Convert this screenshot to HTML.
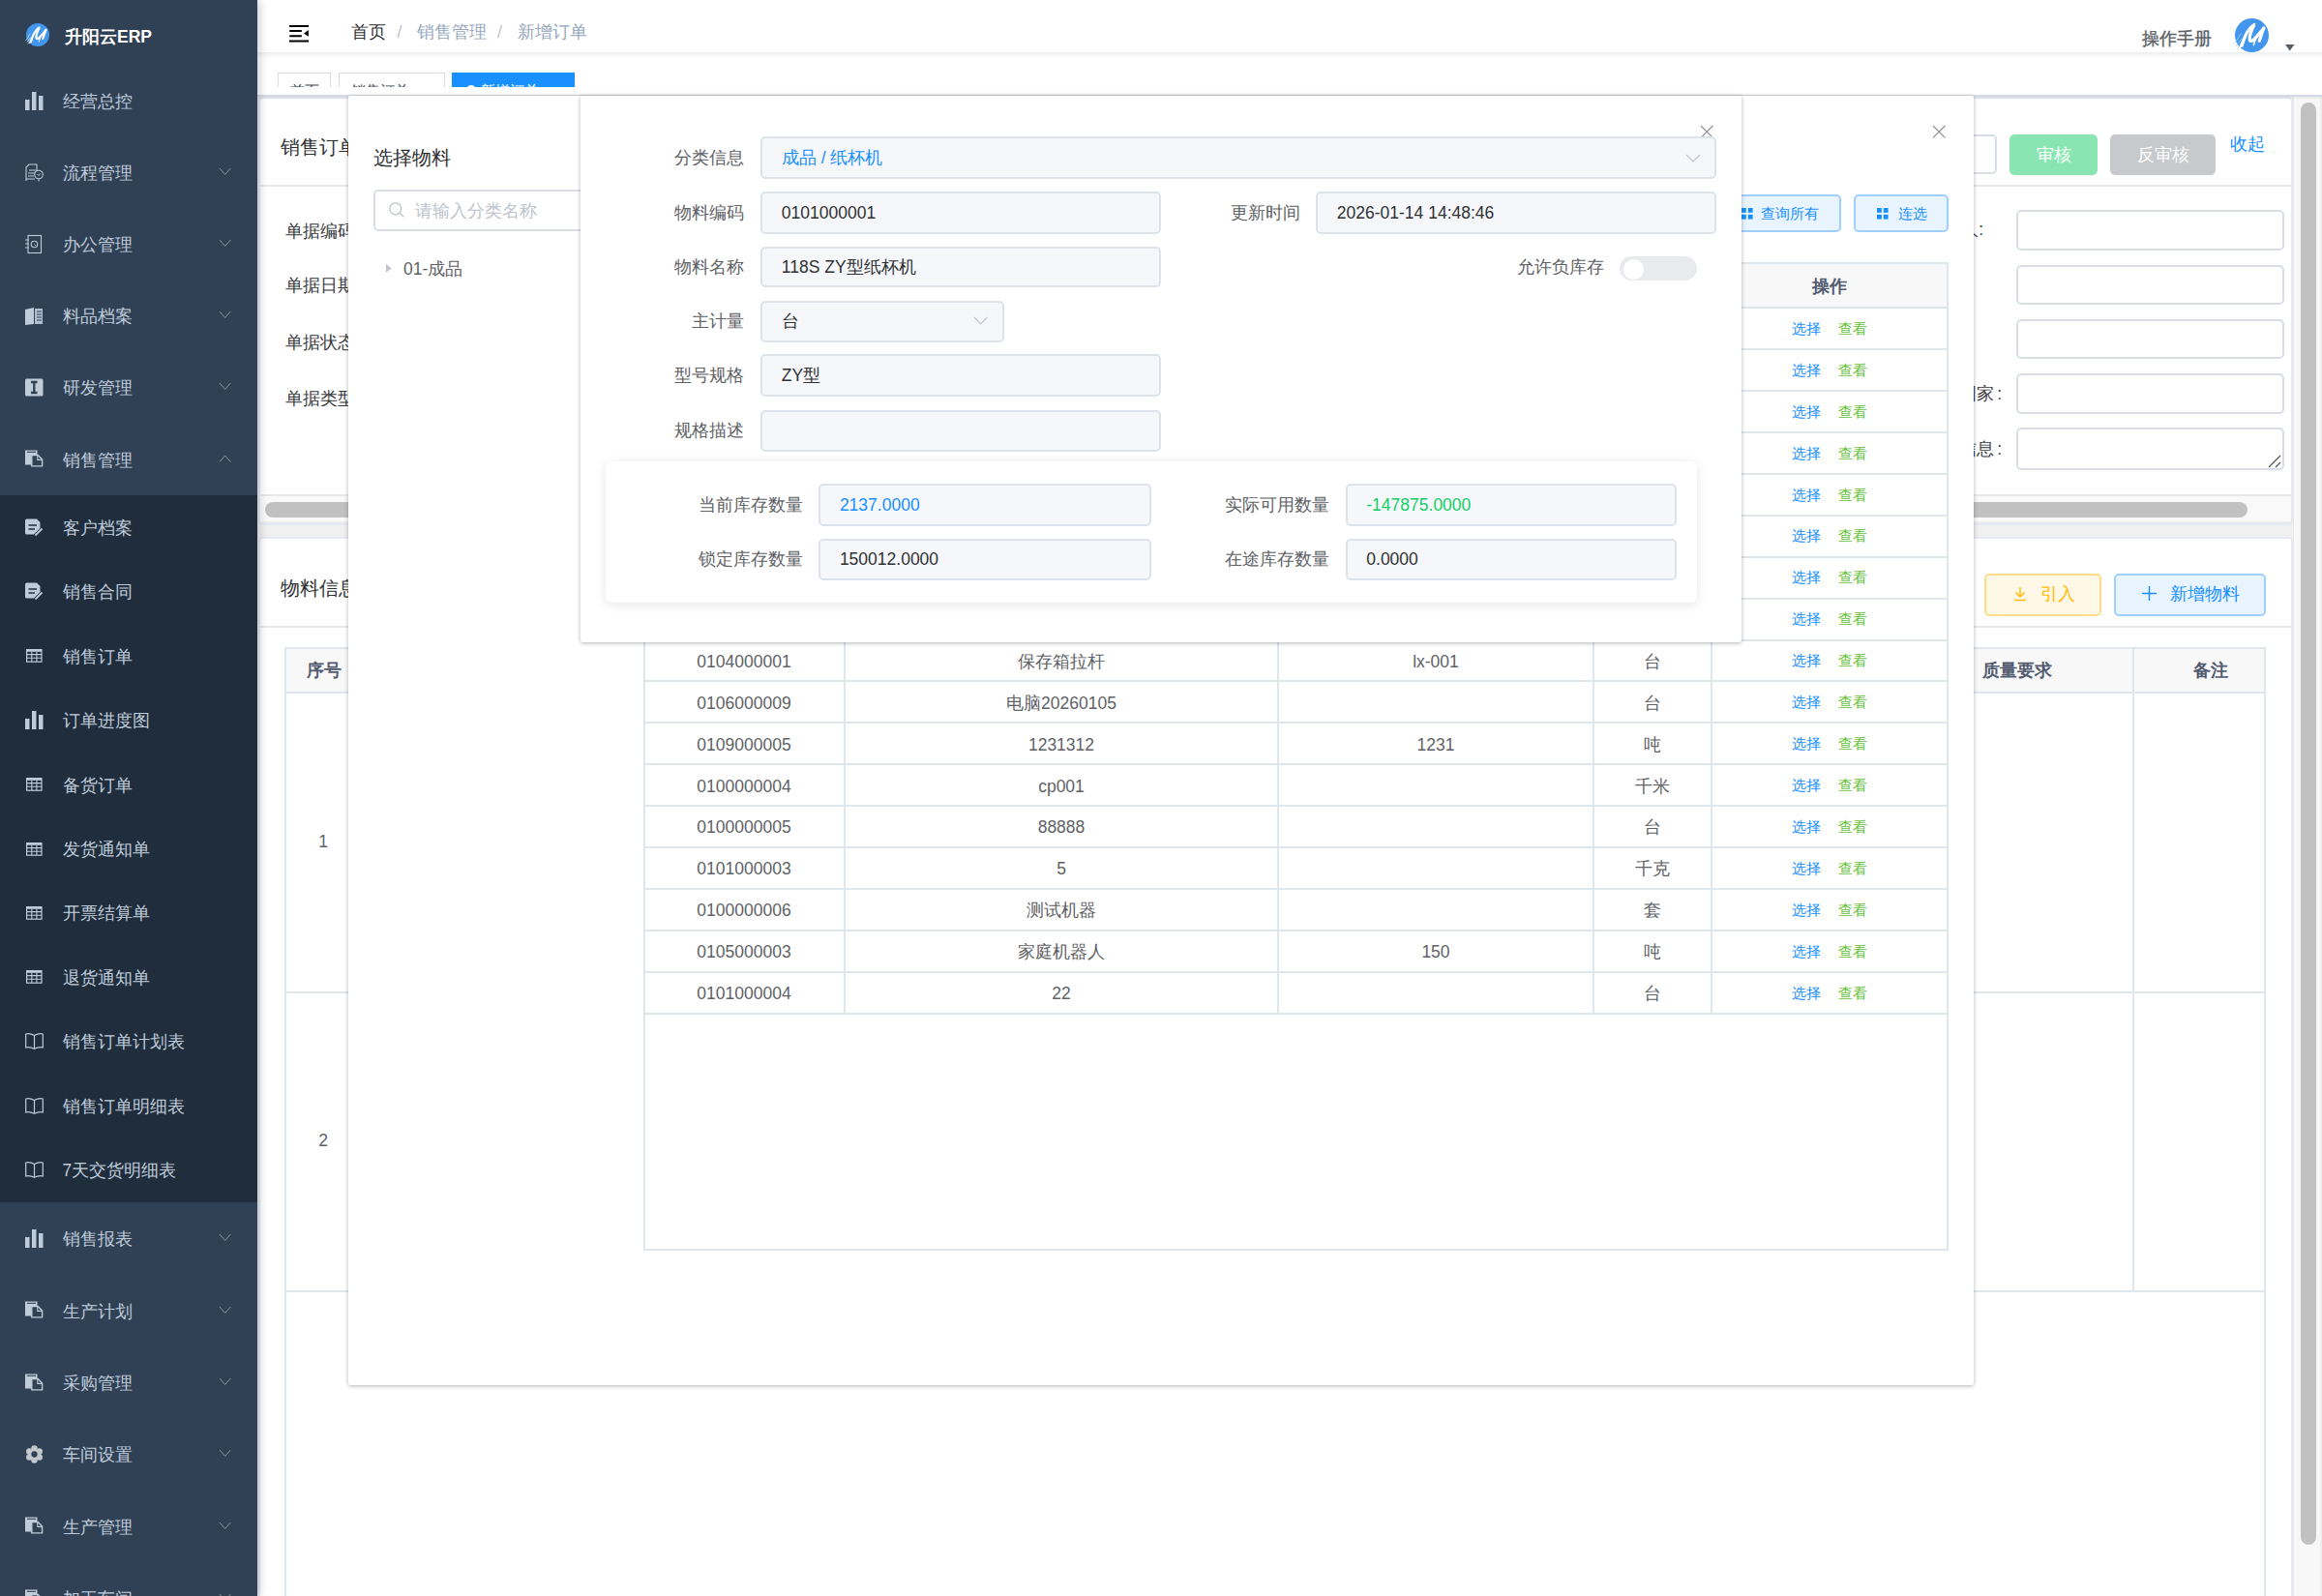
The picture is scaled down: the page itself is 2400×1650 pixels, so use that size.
<!DOCTYPE html><html><head><meta charset="utf-8"><style>
html,body{margin:0;padding:0;}
body{width:2400px;height:1650px;position:relative;overflow:hidden;background:#fff;font-family:"Liberation Sans",sans-serif;}
.t{position:absolute;white-space:nowrap;}
.b{position:absolute;box-sizing:border-box;}
svg{position:absolute;overflow:visible;}
.inp{position:absolute;box-sizing:border-box;border:1.3px solid #dcdfe6;border-radius:5px;background:#fff;}
.dis{position:absolute;box-sizing:border-box;border:1.3px solid #e4e7ed;border-radius:5px;background:#f5f7fa;}
</style></head><body>
<div class="b" style="left:266px;top:0px;width:2134px;height:1650px;background:#f0f0f0;"></div>
<div class="b" style="left:266.5px;top:99.8px;width:2103.5px;height:443.2px;background:#fff;border:2px solid #e4e9f3;border-radius:5px;"></div>
<div class="b" style="left:266.5px;top:191px;width:2103.5px;height:2px;background:#e4e9f3;"></div>
<div class="t" style="left:290px;top:140.0px;height:24px;line-height:24px;font-size:20px;color:#303133;font-weight:normal;">销售订单信息</div>
<div class="t" style="left:294.7px;top:226.9px;height:24px;line-height:24px;font-size:17.5px;color:#3a3b3e;font-weight:normal;">单据编码：</div>
<div class="t" style="left:294.7px;top:282.8px;height:24px;line-height:24px;font-size:17.5px;color:#3a3b3e;font-weight:normal;">单据日期：</div>
<div class="t" style="left:294.7px;top:342.0px;height:24px;line-height:24px;font-size:17.5px;color:#3a3b3e;font-weight:normal;">单据状态：</div>
<div class="t" style="left:294.7px;top:400.0px;height:24px;line-height:24px;font-size:17.5px;color:#3a3b3e;font-weight:normal;">单据类型：</div>
<div class="t" style="left:1930px;width:120px;text-align:right;top:224.5px;height:24px;line-height:24px;font-size:17.5px;color:#3a3b3e;font-weight:normal;">负责人:</div>
<div class="t" style="left:1949px;width:120px;text-align:right;top:395.4px;height:24px;line-height:24px;font-size:17.5px;color:#3a3b3e;font-weight:normal;">国家&thinsp;:</div>
<div class="t" style="left:1949px;width:120px;text-align:right;top:451.8px;height:24px;line-height:24px;font-size:17.5px;color:#3a3b3e;font-weight:normal;">信息&thinsp;:</div>
<div class="b" style="left:2083.7px;top:216.7px;width:277.5px;height:42.69999999999999px;border:2px solid #d9dde6;border-radius:5px;background:#fff;"></div>
<div class="b" style="left:2083.7px;top:273.6px;width:277.5px;height:41.69999999999999px;border:2px solid #d9dde6;border-radius:5px;background:#fff;"></div>
<div class="b" style="left:2083.7px;top:329.5px;width:277.5px;height:41.80000000000001px;border:2px solid #d9dde6;border-radius:5px;background:#fff;"></div>
<div class="b" style="left:2083.7px;top:386px;width:277.5px;height:41.69999999999999px;border:2px solid #d9dde6;border-radius:5px;background:#fff;"></div>
<div class="b" style="left:2083.7px;top:441.7px;width:277.5px;height:44.0px;border:2px solid #d9dde6;border-radius:5px;background:#fff;"></div>
<svg style="left:2344px;top:470px" width="14" height="14"><path d="M1 13 L13 1 M8 13 L13 8" stroke="#555" stroke-width="1.2"/></svg>
<div class="b" style="left:1960px;top:139.3px;width:103.59999999999991px;height:41.19999999999999px;border:2px solid #d9dde6;border-radius:5px;background:#fff;"></div>
<div class="b" style="left:2077px;top:139px;width:91px;height:41.80000000000001px;background:#89e6b2;border-radius:5px;"></div>
<div class="t" style="left:2077.0px;width:91px;text-align:center;top:148.0px;height:24px;line-height:24px;font-size:17.5px;color:#fff;font-weight:normal;">审核</div>
<div class="b" style="left:2181px;top:139px;width:109px;height:41.80000000000001px;background:#c8c9cc;border-radius:5px;"></div>
<div class="t" style="left:2181.0px;width:109px;text-align:center;top:148.0px;height:24px;line-height:24px;font-size:17.5px;color:#fff;font-weight:normal;">反审核</div>
<div class="t" style="left:2305px;top:137.0px;height:24px;line-height:24px;font-size:17.5px;color:#1890ff;font-weight:normal;">收起</div>
<div class="b" style="left:270px;top:510.8px;width:2098px;height:30.400000000000034px;background:#f9f9f9;border-top:2px solid #e8e8e8;border-bottom:2px solid #ececec;"></div>
<div class="b" style="left:273.8px;top:519px;width:2048.7999999999997px;height:16px;background:#c1c1c1;border-radius:8px;"></div>
<div class="b" style="left:266.5px;top:555px;width:2103.5px;height:1145px;background:#fff;border:2px solid #e4e9f3;border-radius:5px;"></div>
<div class="b" style="left:266.5px;top:647.3px;width:2103.5px;height:2.0px;background:#e4e9f3;"></div>
<div class="t" style="left:290px;top:596.4px;height:24px;line-height:24px;font-size:20px;color:#303133;font-weight:normal;">物料信息</div>
<div class="b" style="left:2051.4px;top:593px;width:120.59999999999991px;height:43.60000000000002px;background:#fff8e6;border:2.2px solid #ffdc8a;border-radius:5px;"></div>
<svg style="left:2080.5px;top:605.5px" width="14" height="16"><path d="M7 1 V11 M2.5 6.5 L7 11 L11.5 6.5 M1 14.5 H13" fill="none" stroke="#ffba00" stroke-width="1.4"/></svg>
<div class="t" style="left:2109px;top:601.5px;height:24px;line-height:24px;font-size:17.5px;color:#ffba00;font-weight:normal;">引入</div>
<div class="b" style="left:2185.2px;top:593px;width:156.80000000000018px;height:43.60000000000002px;background:#e8f4ff;border:2.2px solid #9ecfff;border-radius:5px;"></div>
<svg style="left:2214px;top:606px" width="15" height="15"><path d="M7.5 0 V15 M0 7.5 H15" fill="none" stroke="#1890ff" stroke-width="1.4"/></svg>
<div class="t" style="left:2243px;top:601.5px;height:24px;line-height:24px;font-size:17.5px;color:#1890ff;font-weight:normal;">新增物料</div>
<div class="b" style="left:294px;top:669px;width:2048px;height:47.700000000000045px;background:#f8f8f9;"></div>
<div class="b" style="left:294px;top:669px;width:2048px;height:1031px;border:2px solid #dfe6ec;"></div>
<div class="b" style="left:294px;top:714.8px;width:2048px;height:2.0px;background:#dfe6ec;"></div>
<div class="b" style="left:294px;top:1024.7px;width:2048px;height:2.0px;background:#dfe6ec;"></div>
<div class="b" style="left:294px;top:1334px;width:2048px;height:2px;background:#dfe6ec;"></div>
<div class="b" style="left:373px;top:669px;width:2px;height:667px;background:#dfe6ec;"></div>
<div class="b" style="left:1964px;top:669px;width:2px;height:667px;background:#dfe6ec;"></div>
<div class="b" style="left:2204.4px;top:669px;width:2.0px;height:667px;background:#dfe6ec;"></div>
<div class="t" style="left:295.5px;width:78px;text-align:center;top:681.0px;height:24px;line-height:24px;font-size:17.5px;color:#515a6e;font-weight:bold;">序号</div>
<div class="t" style="left:2049px;top:681.0px;height:24px;line-height:24px;font-size:17.5px;color:#515a6e;font-weight:bold;">质量要求</div>
<div class="t" style="left:2235.0px;width:100px;text-align:center;top:681.0px;height:24px;line-height:24px;font-size:17.5px;color:#515a6e;font-weight:bold;">备注</div>
<div class="t" style="left:314.0px;width:40px;text-align:center;top:858.3px;height:24px;line-height:24px;font-size:17.5px;color:#606266;font-weight:normal;">1</div>
<div class="t" style="left:314.0px;width:40px;text-align:center;top:1167.3px;height:24px;line-height:24px;font-size:17.5px;color:#606266;font-weight:normal;">2</div>
<div class="b" style="left:2370px;top:99.8px;width:30px;height:1550.2px;background:#f8f8f8;border-left:1.6px solid #e8e8e8;border-right:2px solid #efefef;"></div>
<div class="b" style="left:2378px;top:106px;width:16px;height:1491px;background:#c1c1c1;border-radius:8px;"></div>
<div class="b" style="left:266px;top:0px;width:2134px;height:54px;background:#fff;box-shadow:0 1px 5px rgba(0,21,41,.10);"></div>
<svg style="left:299px;top:25px" width="20" height="20"><path d="M0 1.9 H20 M0.3 7 H12.8 M0.3 12.3 H12.8 M0 17.6 H20" stroke="#000" stroke-width="2"/><path d="M19.8 6 L15 9.4 L19.8 12.8 Z" fill="#000"/></svg>
<div class="t" style="left:363px;top:21.4px;height:24px;line-height:24px;font-size:17.5px;color:#303133;font-weight:normal;">首页</div>
<div class="t" style="left:410.5px;top:21.4px;height:24px;line-height:24px;font-size:17.5px;color:#c0c4cc;font-weight:normal;">/</div>
<div class="t" style="left:431px;top:21.4px;height:24px;line-height:24px;font-size:17.5px;color:#97a8be;font-weight:normal;">销售管理</div>
<div class="t" style="left:514px;top:21.4px;height:24px;line-height:24px;font-size:17.5px;color:#c0c4cc;font-weight:normal;">/</div>
<div class="t" style="left:534.5px;top:21.4px;height:24px;line-height:24px;font-size:17.5px;color:#97a8be;font-weight:normal;">新增订单</div>
<div class="t" style="left:2214px;top:27.5px;height:24px;line-height:24px;font-size:17.5px;color:#5a5e66;font-weight:normal;-webkit-text-stroke:0.35px #5a5e66;">操作手册</div>
<svg style="left:2310px;top:18.8px" width="35" height="35" viewBox="0 0 35 35"><circle cx="17.5" cy="17.5" r="17.5" fill="#4296ee"/><path d="M4.3 30.5 L8.6 29.2 C10 24 12.5 17 16 12 C18 9 20.6 7.6 21.2 6.2 C21.4 5 20.3 4.6 19 5.2 C15.5 7.2 12 12 9.8 16.5 C7.8 20.5 6 25.5 4.3 30.5 Z" fill="#fff"/><path d="M19.6 7.5 C17.5 11.5 15 17 15.2 21.6 C15.5 24.2 17.5 23.8 19.5 22 C23 18.8 26.5 14 29.8 10.2" fill="none" stroke="#fff" stroke-width="3.2" stroke-linecap="round"/><path d="M29.8 10 C28 15 26.5 19.5 25.2 23.2" fill="none" stroke="#fff" stroke-width="3.3" stroke-linecap="round"/><path d="M22.2 19.5 L19.3 27.6" fill="none" stroke="#fff" stroke-width="1.5" stroke-linecap="round"/><path d="M-0.8 26.5 L6.5 15.5 M1.2 28.8 L7 21 M2.5 31.5 L5 28" fill="none" stroke="#a9cdf5" stroke-width="1" opacity=".8"/></svg>
<svg style="left:2362px;top:45.8px" width="9.5" height="6.5"><path d="M0 0 H9.5 L4.75 6.5 Z" fill="#5a5e66"/></svg>
<div class="b" style="left:266px;top:54px;width:2134px;height:44px;background:#fff;"></div>
<div class="b" style="left:266px;top:97.8px;width:2134px;height:2.0px;background:#d5dae3;box-shadow:0 1px 3px rgba(0,0,0,.10);"></div>
<div class="b" style="left:266px;top:54px;width:2134px;height:8px;background:linear-gradient(rgba(0,21,41,.075),rgba(0,21,41,.02) 50%,rgba(0,21,41,0));"></div>
<div class="b" style="left:266px;top:54px;width:2134px;height:36px;overflow:hidden;">
<div class="b" style="left:21.100000000000023px;top:21.200000000000003px;width:54.599999999999966px;height:37.6px;background:#fff;border:1.6px solid #d8dce5;"></div>
<div class="b" style="left:84.10000000000002px;top:21.200000000000003px;width:109.59999999999997px;height:37.6px;background:#fff;border:1.6px solid #d8dce5;"></div>
<div class="b" style="left:200.89999999999998px;top:21.200000000000003px;width:127.0px;height:37.6px;background:#1890ff;border:1.6px solid #1890ff;"></div>
<div class="t" style="left:34px;top:27.5px;height:24px;line-height:24px;font-size:15px;color:#495060;font-weight:normal;">首页</div>
<div class="t" style="left:96.5px;top:27.5px;height:24px;line-height:24px;font-size:15px;color:#495060;font-weight:normal;">销售订单</div>
<div class="b" style="left:216px;top:34.3px;width:10px;height:10.0px;background:#fff;border-radius:50%;"></div>
<div class="t" style="left:230.60000000000002px;top:27.5px;height:24px;line-height:24px;font-size:15px;color:#fff;font-weight:normal;">新增订单</div>
</div>
<div class="b" style="left:0px;top:0px;width:266px;height:1650px;background:#304156;box-shadow:2px 0 9px rgba(0,21,41,.22);"></div>
<div class="b" style="left:0px;top:512.1px;width:266px;height:731.4px;background:#1f2d3d;"></div>
<svg style="left:27px;top:24.4px" width="24" height="24" viewBox="0 0 35 35"><circle cx="17.5" cy="17.5" r="17.5" fill="#4296ee"/><path d="M4.3 30.5 L8.6 29.2 C10 24 12.5 17 16 12 C18 9 20.6 7.6 21.2 6.2 C21.4 5 20.3 4.6 19 5.2 C15.5 7.2 12 12 9.8 16.5 C7.8 20.5 6 25.5 4.3 30.5 Z" fill="#fff"/><path d="M19.6 7.5 C17.5 11.5 15 17 15.2 21.6 C15.5 24.2 17.5 23.8 19.5 22 C23 18.8 26.5 14 29.8 10.2" fill="none" stroke="#fff" stroke-width="3.2" stroke-linecap="round"/><path d="M29.8 10 C28 15 26.5 19.5 25.2 23.2" fill="none" stroke="#fff" stroke-width="3.3" stroke-linecap="round"/><path d="M22.2 19.5 L19.3 27.6" fill="none" stroke="#fff" stroke-width="1.5" stroke-linecap="round"/><path d="M-0.8 26.5 L6.5 15.5 M1.2 28.8 L7 21 M2.5 31.5 L5 28" fill="none" stroke="#ffffff" stroke-width="1" opacity=".8"/></svg>
<div class="t" style="left:67px;top:26.200000000000003px;height:24px;line-height:24px;font-size:17.5px;color:#fff;font-weight:bold;">升阳云ERP</div>
<svg style="left:25.7px;top:94.52px" width="19" height="19"><rect x="0" y="8" width="4.5" height="11" fill="#bfcbd9"/><rect x="7" y="0" width="4.5" height="19" fill="#bfcbd9"/><rect x="14" y="4" width="4.5" height="15" fill="#bfcbd9"/></svg>
<div class="t" style="left:64.6px;top:92.52px;height:24px;line-height:24px;font-size:17.5px;color:#bfcbd9;font-weight:normal;">经营总控</div>
<svg style="left:25.7px;top:168.76px" width="19" height="19"><path d="M1 18 V4 L4 1 H12 V8 M4 7 H11 M3 10 H10 M3 13 H9 M1 16 H10" fill="none" stroke="#bfcbd9" stroke-width="1.1"/><circle cx="14" cy="11.5" r="4.3" fill="none" stroke="#bfcbd9" stroke-width="1.1"/><path d="M12.5 11 L14 12.5 L15.5 10.5 M14 16 V18.5" fill="none" stroke="#bfcbd9" stroke-width="1"/></svg>
<div class="t" style="left:64.6px;top:166.76px;height:24px;line-height:24px;font-size:17.5px;color:#bfcbd9;font-weight:normal;">流程管理</div>
<svg style="left:227.3px;top:173.76px" width="11.299999999999983" height="6.5"><path d="M0 0 L5.6499999999999915 6.5 L11.299999999999983 0" fill="none" stroke="#909399" stroke-width="1.0"/></svg>
<svg style="left:25.7px;top:243.0px" width="19" height="19"><rect x="3" y="0.5" width="13.5" height="18" fill="none" stroke="#bfcbd9" stroke-width="1.1"/><circle cx="9.5" cy="9.5" r="3.3" fill="none" stroke="#bfcbd9" stroke-width="1.1"/><path d="M0 5 H4 M0 9 H4 M0 13 H4 M9.5 9.5 L11 11" stroke="#bfcbd9" stroke-width="1"/></svg>
<div class="t" style="left:64.6px;top:241.0px;height:24px;line-height:24px;font-size:17.5px;color:#bfcbd9;font-weight:normal;">办公管理</div>
<svg style="left:227.3px;top:248.0px" width="11.299999999999983" height="6.5"><path d="M0 0 L5.6499999999999915 6.5 L11.299999999999983 0" fill="none" stroke="#909399" stroke-width="1.0"/></svg>
<svg style="left:25.7px;top:317.23999999999995px" width="19" height="19"><path d="M0 3 L9 1 V18 L0 19 Z" fill="#bfcbd9"/><path d="M10 2 H18 V18 H10 Z" fill="#bfcbd9" opacity=".9"/><path d="M12 5 H17 M12 8 H17 M12 11 H17 M12 14 H17" stroke="#304156" stroke-width="1"/></svg>
<div class="t" style="left:64.6px;top:315.23999999999995px;height:24px;line-height:24px;font-size:17.5px;color:#bfcbd9;font-weight:normal;">料品档案</div>
<svg style="left:227.3px;top:322.23999999999995px" width="11.299999999999983" height="6.5"><path d="M0 0 L5.6499999999999915 6.5 L11.299999999999983 0" fill="none" stroke="#909399" stroke-width="1.0"/></svg>
<svg style="left:25.7px;top:391.47999999999996px" width="19" height="19"><rect x="0" y="0.5" width="18.5" height="18" rx="1.5" fill="#bfcbd9"/><path d="M6 4 H12.5 M6 15 H12.5 M9.3 4 V15" stroke="#304156" stroke-width="2.3"/></svg>
<div class="t" style="left:64.6px;top:389.47999999999996px;height:24px;line-height:24px;font-size:17.5px;color:#bfcbd9;font-weight:normal;">研发管理</div>
<svg style="left:227.3px;top:396.47999999999996px" width="11.299999999999983" height="6.5"><path d="M0 0 L5.6499999999999915 6.5 L11.299999999999983 0" fill="none" stroke="#909399" stroke-width="1.0"/></svg>
<svg style="left:25.7px;top:465.41999999999996px" width="19" height="19"><path d="M0 0.5 H12.5 V5.5 H6.8 V15.6 H0 Z" fill="#bfcbd9"/><path d="M1.8 2.3 H11" stroke="#304156" stroke-width="1.1"/><path d="M6.8 5.5 H13.2 L17.6 10 V16.9 H6.8 Z" fill="none" stroke="#bfcbd9" stroke-width="1.4"/><path d="M12.8 5.8 V10.4 H17.4" fill="none" stroke="#bfcbd9" stroke-width="1.1"/></svg>
<div class="t" style="left:64.6px;top:463.71999999999997px;height:24px;line-height:24px;font-size:17.5px;color:#bfcbd9;font-weight:normal;">销售管理</div>
<svg style="left:227.3px;top:470.71999999999997px" width="11.299999999999983" height="6.5"><path d="M0 6.5 L5.6499999999999915 0 L11.299999999999983 6.5" fill="none" stroke="#909399" stroke-width="1.0"/></svg>
<svg style="left:25.7px;top:536.0000000000001px" width="19" height="19"><path d="M1.5 0.5 H12 L15.5 4 V10 L9 16.5 H1.5 Q0 16.5 0 15 V2 Q0 0.5 1.5 0.5 Z" fill="#bfcbd9"/><path d="M3.5 7 H12 M3.5 11 H10" stroke="#1f2d3d" stroke-width="1.6"/><path d="M10.5 17.5 L17.5 10.5" stroke="#bfcbd9" stroke-width="1.8"/></svg>
<div class="t" style="left:64.6px;top:534.0000000000001px;height:24px;line-height:24px;font-size:17.5px;color:#bfcbd9;font-weight:normal;">客户档案</div>
<svg style="left:25.7px;top:602.4000000000001px" width="19" height="19"><path d="M1.5 0.5 H12 L15.5 4 V10 L9 16.5 H1.5 Q0 16.5 0 15 V2 Q0 0.5 1.5 0.5 Z" fill="#bfcbd9"/><path d="M3.5 7 H12 M3.5 11 H10" stroke="#1f2d3d" stroke-width="1.6"/><path d="M10.5 17.5 L17.5 10.5" stroke="#bfcbd9" stroke-width="1.8"/></svg>
<div class="t" style="left:64.6px;top:600.4000000000001px;height:24px;line-height:24px;font-size:17.5px;color:#bfcbd9;font-weight:normal;">销售合同</div>
<svg style="left:26.7px;top:671.3000000000002px" width="17" height="14"><rect x="0.6" y="0.6" width="15.4" height="12.6" fill="none" stroke="#bfcbd9" stroke-width="1.2"/><rect x="0.6" y="0.6" width="15.4" height="2.2" fill="#bfcbd9"/><path d="M0.6 5.6 H16 M0.6 9.3 H16 M5.8 2.8 V13.2 M10.9 2.8 V13.2" stroke="#bfcbd9" stroke-width="1.1"/></svg>
<div class="t" style="left:64.6px;top:666.8000000000002px;height:24px;line-height:24px;font-size:17.5px;color:#bfcbd9;font-weight:normal;">销售订单</div>
<svg style="left:25.7px;top:735.2000000000002px" width="19" height="19"><rect x="0" y="8" width="4.5" height="11" fill="#bfcbd9"/><rect x="7" y="0" width="4.5" height="19" fill="#bfcbd9"/><rect x="14" y="4" width="4.5" height="15" fill="#bfcbd9"/></svg>
<div class="t" style="left:64.6px;top:733.2000000000002px;height:24px;line-height:24px;font-size:17.5px;color:#bfcbd9;font-weight:normal;">订单进度图</div>
<svg style="left:26.7px;top:804.1000000000001px" width="17" height="14"><rect x="0.6" y="0.6" width="15.4" height="12.6" fill="none" stroke="#bfcbd9" stroke-width="1.2"/><rect x="0.6" y="0.6" width="15.4" height="2.2" fill="#bfcbd9"/><path d="M0.6 5.6 H16 M0.6 9.3 H16 M5.8 2.8 V13.2 M10.9 2.8 V13.2" stroke="#bfcbd9" stroke-width="1.1"/></svg>
<div class="t" style="left:64.6px;top:799.6000000000001px;height:24px;line-height:24px;font-size:17.5px;color:#bfcbd9;font-weight:normal;">备货订单</div>
<svg style="left:26.7px;top:870.5000000000001px" width="17" height="14"><rect x="0.6" y="0.6" width="15.4" height="12.6" fill="none" stroke="#bfcbd9" stroke-width="1.2"/><rect x="0.6" y="0.6" width="15.4" height="2.2" fill="#bfcbd9"/><path d="M0.6 5.6 H16 M0.6 9.3 H16 M5.8 2.8 V13.2 M10.9 2.8 V13.2" stroke="#bfcbd9" stroke-width="1.1"/></svg>
<div class="t" style="left:64.6px;top:866.0000000000001px;height:24px;line-height:24px;font-size:17.5px;color:#bfcbd9;font-weight:normal;">发货通知单</div>
<svg style="left:26.7px;top:936.9000000000001px" width="17" height="14"><rect x="0.6" y="0.6" width="15.4" height="12.6" fill="none" stroke="#bfcbd9" stroke-width="1.2"/><rect x="0.6" y="0.6" width="15.4" height="2.2" fill="#bfcbd9"/><path d="M0.6 5.6 H16 M0.6 9.3 H16 M5.8 2.8 V13.2 M10.9 2.8 V13.2" stroke="#bfcbd9" stroke-width="1.1"/></svg>
<div class="t" style="left:64.6px;top:932.4000000000001px;height:24px;line-height:24px;font-size:17.5px;color:#bfcbd9;font-weight:normal;">开票结算单</div>
<svg style="left:26.7px;top:1003.3000000000002px" width="17" height="14"><rect x="0.6" y="0.6" width="15.4" height="12.6" fill="none" stroke="#bfcbd9" stroke-width="1.2"/><rect x="0.6" y="0.6" width="15.4" height="2.2" fill="#bfcbd9"/><path d="M0.6 5.6 H16 M0.6 9.3 H16 M5.8 2.8 V13.2 M10.9 2.8 V13.2" stroke="#bfcbd9" stroke-width="1.1"/></svg>
<div class="t" style="left:64.6px;top:998.8000000000002px;height:24px;line-height:24px;font-size:17.5px;color:#bfcbd9;font-weight:normal;">退货通知单</div>
<svg style="left:25.7px;top:1068.2000000000003px" width="19" height="17"><path d="M9.5 2.5 Q5 0 0.7 1 V15 Q5 14 9.5 16.3 Q14 14 18.3 15 V1 Q14 0 9.5 2.5 Z M9.5 2.5 V16.3" fill="none" stroke="#bfcbd9" stroke-width="1.2"/></svg>
<div class="t" style="left:64.6px;top:1065.2000000000003px;height:24px;line-height:24px;font-size:17.5px;color:#bfcbd9;font-weight:normal;">销售订单计划表</div>
<svg style="left:25.7px;top:1134.6000000000001px" width="19" height="17"><path d="M9.5 2.5 Q5 0 0.7 1 V15 Q5 14 9.5 16.3 Q14 14 18.3 15 V1 Q14 0 9.5 2.5 Z M9.5 2.5 V16.3" fill="none" stroke="#bfcbd9" stroke-width="1.2"/></svg>
<div class="t" style="left:64.6px;top:1131.6000000000001px;height:24px;line-height:24px;font-size:17.5px;color:#bfcbd9;font-weight:normal;">销售订单明细表</div>
<svg style="left:25.7px;top:1201.0px" width="19" height="17"><path d="M9.5 2.5 Q5 0 0.7 1 V15 Q5 14 9.5 16.3 Q14 14 18.3 15 V1 Q14 0 9.5 2.5 Z M9.5 2.5 V16.3" fill="none" stroke="#bfcbd9" stroke-width="1.2"/></svg>
<div class="t" style="left:64.6px;top:1198.0px;height:24px;line-height:24px;font-size:17.5px;color:#bfcbd9;font-weight:normal;">7天交货明细表</div>
<svg style="left:25.7px;top:1271.3500000000001px" width="19" height="19"><rect x="0" y="8" width="4.5" height="11" fill="#bfcbd9"/><rect x="7" y="0" width="4.5" height="19" fill="#bfcbd9"/><rect x="14" y="4" width="4.5" height="15" fill="#bfcbd9"/></svg>
<div class="t" style="left:64.6px;top:1269.3500000000001px;height:24px;line-height:24px;font-size:17.5px;color:#bfcbd9;font-weight:normal;">销售报表</div>
<svg style="left:227.3px;top:1276.3500000000001px" width="11.299999999999983" height="6.5"><path d="M0 0 L5.6499999999999915 6.5 L11.299999999999983 0" fill="none" stroke="#909399" stroke-width="1.0"/></svg>
<svg style="left:25.7px;top:1345.3500000000001px" width="19" height="19"><path d="M0 0.5 H12.5 V5.5 H6.8 V15.6 H0 Z" fill="#bfcbd9"/><path d="M1.8 2.3 H11" stroke="#304156" stroke-width="1.1"/><path d="M6.8 5.5 H13.2 L17.6 10 V16.9 H6.8 Z" fill="none" stroke="#bfcbd9" stroke-width="1.4"/><path d="M12.8 5.8 V10.4 H17.4" fill="none" stroke="#bfcbd9" stroke-width="1.1"/></svg>
<div class="t" style="left:64.6px;top:1343.65px;height:24px;line-height:24px;font-size:17.5px;color:#bfcbd9;font-weight:normal;">生产计划</div>
<svg style="left:227.3px;top:1350.65px" width="11.299999999999983" height="6.5"><path d="M0 0 L5.6499999999999915 6.5 L11.299999999999983 0" fill="none" stroke="#909399" stroke-width="1.0"/></svg>
<svg style="left:25.7px;top:1419.65px" width="19" height="19"><path d="M0 0.5 H12.5 V5.5 H6.8 V15.6 H0 Z" fill="#bfcbd9"/><path d="M1.8 2.3 H11" stroke="#304156" stroke-width="1.1"/><path d="M6.8 5.5 H13.2 L17.6 10 V16.9 H6.8 Z" fill="none" stroke="#bfcbd9" stroke-width="1.4"/><path d="M12.8 5.8 V10.4 H17.4" fill="none" stroke="#bfcbd9" stroke-width="1.1"/></svg>
<div class="t" style="left:64.6px;top:1417.95px;height:24px;line-height:24px;font-size:17.5px;color:#bfcbd9;font-weight:normal;">采购管理</div>
<svg style="left:227.3px;top:1424.95px" width="11.299999999999983" height="6.5"><path d="M0 0 L5.6499999999999915 6.5 L11.299999999999983 0" fill="none" stroke="#909399" stroke-width="1.0"/></svg>
<svg style="left:25.7px;top:1494.2500000000002px" width="19" height="19" viewBox="0 0 20 20"><g fill="#c4c7cc"><circle cx="10" cy="3.6" r="3.4"/><circle cx="15.5" cy="6.8" r="3.4"/><circle cx="15.5" cy="13.2" r="3.4"/><circle cx="10" cy="16.4" r="3.4"/><circle cx="4.5" cy="13.2" r="3.4"/><circle cx="4.5" cy="6.8" r="3.4"/><circle cx="10" cy="10" r="6.5"/></g><circle cx="10" cy="10" r="3.3" fill="#304156"/></svg>
<div class="t" style="left:64.6px;top:1492.2500000000002px;height:24px;line-height:24px;font-size:17.5px;color:#bfcbd9;font-weight:normal;">车间设置</div>
<svg style="left:227.3px;top:1499.2500000000002px" width="11.299999999999983" height="6.5"><path d="M0 0 L5.6499999999999915 6.5 L11.299999999999983 0" fill="none" stroke="#909399" stroke-width="1.0"/></svg>
<svg style="left:25.7px;top:1568.2500000000002px" width="19" height="19"><path d="M0 0.5 H12.5 V5.5 H6.8 V15.6 H0 Z" fill="#bfcbd9"/><path d="M1.8 2.3 H11" stroke="#304156" stroke-width="1.1"/><path d="M6.8 5.5 H13.2 L17.6 10 V16.9 H6.8 Z" fill="none" stroke="#bfcbd9" stroke-width="1.4"/><path d="M12.8 5.8 V10.4 H17.4" fill="none" stroke="#bfcbd9" stroke-width="1.1"/></svg>
<div class="t" style="left:64.6px;top:1566.5500000000002px;height:24px;line-height:24px;font-size:17.5px;color:#bfcbd9;font-weight:normal;">生产管理</div>
<svg style="left:227.3px;top:1573.5500000000002px" width="11.299999999999983" height="6.5"><path d="M0 0 L5.6499999999999915 6.5 L11.299999999999983 0" fill="none" stroke="#909399" stroke-width="1.0"/></svg>
<svg style="left:25.7px;top:1642.5500000000002px" width="19" height="19"><path d="M0 0.5 H12.5 V5.5 H6.8 V15.6 H0 Z" fill="#bfcbd9"/><path d="M1.8 2.3 H11" stroke="#304156" stroke-width="1.1"/><path d="M6.8 5.5 H13.2 L17.6 10 V16.9 H6.8 Z" fill="none" stroke="#bfcbd9" stroke-width="1.4"/><path d="M12.8 5.8 V10.4 H17.4" fill="none" stroke="#bfcbd9" stroke-width="1.1"/></svg>
<div class="t" style="left:64.6px;top:1640.8500000000001px;height:24px;line-height:24px;font-size:17.5px;color:#bfcbd9;font-weight:normal;">加工车间</div>
<svg style="left:227.3px;top:1647.8500000000001px" width="11.299999999999983" height="6.5"><path d="M0 0 L5.6499999999999915 6.5 L11.299999999999983 0" fill="none" stroke="#909399" stroke-width="1.0"/></svg>
<div class="b" style="left:360px;top:99px;width:1680px;height:1333px;background:#fff;border-radius:2px;box-shadow:0 1px 4px rgba(0,0,0,.30);"></div>
<div class="t" style="left:386.4px;top:151.0px;height:24px;line-height:24px;font-size:20px;color:#303133;font-weight:normal;">选择物料</div>
<svg style="left:1998.0px;top:130.0px" width="12.4" height="12.4"><path d="M0 0 L12.4 12.4 M12.4 0 L0 12.4" stroke="#909399" stroke-width="1.3"/></svg>
<div class="b" style="left:386.4px;top:196.3px;width:253.60000000000002px;height:43.099999999999994px;border:2px solid #d9dde6;border-radius:5px;background:#fff;"></div>
<svg style="left:402px;top:209.4px" width="16" height="16"><circle cx="6.8" cy="6.8" r="6" fill="none" stroke="#c0c4cc" stroke-width="1.3"/><path d="M11.2 11.2 L15 15" stroke="#c0c4cc" stroke-width="1.4"/></svg>
<div class="t" style="left:429.2px;top:206.0px;height:24px;line-height:24px;font-size:17.5px;color:#c0c4cc;font-weight:normal;">请输入分类名称</div>
<svg style="left:398.8px;top:273px" width="6" height="9"><path d="M0 0 L5.8 4.4 L0 8.7 Z" fill="#c0c4cc"/></svg>
<div class="t" style="left:417px;top:266.0px;height:24px;line-height:24px;font-size:17.5px;color:#606266;font-weight:normal;">01-成品</div>
<div class="b" style="left:1770px;top:201.4px;width:132.5px;height:39.099999999999994px;background:#e8f4ff;border:2.2px solid #9ecfff;border-radius:5px;"></div>
<svg style="left:1800px;top:215.35px" width="12" height="12"><rect x="0" y="0" width="4.8" height="4.8" fill="#1890ff"/><rect x="6.8" y="0" width="4.8" height="4.8" fill="#1890ff"/><rect x="0" y="6.8" width="4.8" height="4.8" fill="#1890ff"/><rect x="6.8" y="6.8" width="4.8" height="4.8" fill="#1890ff"/></svg>
<div class="t" style="left:1820px;top:209.45px;height:24px;line-height:24px;font-size:15px;color:#1890ff;font-weight:normal;">查询所有</div>
<div class="b" style="left:1916.4px;top:201.4px;width:97.29999999999995px;height:39.099999999999994px;background:#e8f4ff;border:2.2px solid #9ecfff;border-radius:5px;"></div>
<svg style="left:1940px;top:215.35px" width="12" height="12"><rect x="0" y="0" width="4.8" height="4.8" fill="#1890ff"/><rect x="6.8" y="0" width="4.8" height="4.8" fill="#1890ff"/><rect x="0" y="6.8" width="4.8" height="4.8" fill="#1890ff"/><rect x="6.8" y="6.8" width="4.8" height="4.8" fill="#1890ff"/></svg>
<div class="t" style="left:1962px;top:209.45px;height:24px;line-height:24px;font-size:15px;color:#1890ff;font-weight:normal;">连选</div>
<div class="b" style="left:665px;top:271.2px;width:1348.6px;height:46.80000000000001px;background:#f8f8f9;"></div>
<div class="b" style="left:665px;top:271.2px;width:1348.6px;height:1021.3999999999999px;border:2px solid #dfe6ec;"></div>
<div class="t" style="left:665.0px;width:208px;text-align:center;top:283.8px;height:24px;line-height:24px;font-size:17.5px;color:#515a6e;font-weight:bold;">物料编码</div>
<div class="t" style="left:873.0px;width:448px;text-align:center;top:283.8px;height:24px;line-height:24px;font-size:17.5px;color:#515a6e;font-weight:bold;">物料名称</div>
<div class="t" style="left:1321.0px;width:326px;text-align:center;top:283.8px;height:24px;line-height:24px;font-size:17.5px;color:#515a6e;font-weight:bold;">规格型号</div>
<div class="t" style="left:1647.0px;width:122px;text-align:center;top:283.8px;height:24px;line-height:24px;font-size:17.5px;color:#515a6e;font-weight:bold;">单位</div>
<div class="t" style="left:1769.0px;width:244px;text-align:center;top:283.8px;height:24px;line-height:24px;font-size:17.5px;color:#515a6e;font-weight:bold;">操作</div>
<div class="b" style="left:872px;top:271.3px;width:2px;height:776.7px;background:#dfe6ec;"></div>
<div class="b" style="left:1320px;top:271.3px;width:2px;height:776.7px;background:#dfe6ec;"></div>
<div class="b" style="left:1646px;top:271.3px;width:2px;height:776.7px;background:#dfe6ec;"></div>
<div class="b" style="left:1768px;top:271.3px;width:2px;height:776.7px;background:#dfe6ec;"></div>
<div class="b" style="left:665px;top:317.0px;width:1348px;height:2.0px;background:#dfe6ec;"></div>
<div class="t" style="left:665.0px;width:208px;text-align:center;top:328.17px;height:24px;line-height:24px;font-size:17.5px;color:#606266;font-weight:normal;">0101000001</div>
<div class="t" style="left:873.0px;width:448px;text-align:center;top:328.17px;height:24px;line-height:24px;font-size:17.5px;color:#606266;font-weight:normal;">118S ZY型纸杯机</div>
<div class="t" style="left:1321.0px;width:326px;text-align:center;top:328.17px;height:24px;line-height:24px;font-size:17.5px;color:#606266;font-weight:normal;">ZY型</div>
<div class="t" style="left:1647.0px;width:122px;text-align:center;top:328.17px;height:24px;line-height:24px;font-size:17.5px;color:#606266;font-weight:normal;">台</div>
<div class="t" style="left:1852px;top:327.77000000000004px;height:24px;line-height:24px;font-size:15px;color:#1890ff;font-weight:normal;">选择</div>
<div class="t" style="left:1899.8px;top:327.77000000000004px;height:24px;line-height:24px;font-size:15px;color:#67c23a;font-weight:normal;">查看</div>
<div class="b" style="left:665px;top:359.94px;width:1348px;height:2.0px;background:#dfe6ec;"></div>
<div class="t" style="left:665.0px;width:208px;text-align:center;top:371.10999999999996px;height:24px;line-height:24px;font-size:17.5px;color:#606266;font-weight:normal;">0101000002</div>
<div class="t" style="left:873.0px;width:448px;text-align:center;top:371.10999999999996px;height:24px;line-height:24px;font-size:17.5px;color:#606266;font-weight:normal;">纸杯机</div>
<div class="t" style="left:1647.0px;width:122px;text-align:center;top:371.10999999999996px;height:24px;line-height:24px;font-size:17.5px;color:#606266;font-weight:normal;">台</div>
<div class="t" style="left:1852px;top:370.71px;height:24px;line-height:24px;font-size:15px;color:#1890ff;font-weight:normal;">选择</div>
<div class="t" style="left:1899.8px;top:370.71px;height:24px;line-height:24px;font-size:15px;color:#67c23a;font-weight:normal;">查看</div>
<div class="b" style="left:665px;top:402.88px;width:1348px;height:2.0px;background:#dfe6ec;"></div>
<div class="t" style="left:665.0px;width:208px;text-align:center;top:414.05px;height:24px;line-height:24px;font-size:17.5px;color:#606266;font-weight:normal;">0102000001</div>
<div class="t" style="left:873.0px;width:448px;text-align:center;top:414.05px;height:24px;line-height:24px;font-size:17.5px;color:#606266;font-weight:normal;">半成品</div>
<div class="t" style="left:1647.0px;width:122px;text-align:center;top:414.05px;height:24px;line-height:24px;font-size:17.5px;color:#606266;font-weight:normal;">台</div>
<div class="t" style="left:1852px;top:413.65000000000003px;height:24px;line-height:24px;font-size:15px;color:#1890ff;font-weight:normal;">选择</div>
<div class="t" style="left:1899.8px;top:413.65000000000003px;height:24px;line-height:24px;font-size:15px;color:#67c23a;font-weight:normal;">查看</div>
<div class="b" style="left:665px;top:445.82px;width:1348px;height:2.0px;background:#dfe6ec;"></div>
<div class="t" style="left:665.0px;width:208px;text-align:center;top:456.98999999999995px;height:24px;line-height:24px;font-size:17.5px;color:#606266;font-weight:normal;">0103000001</div>
<div class="t" style="left:873.0px;width:448px;text-align:center;top:456.98999999999995px;height:24px;line-height:24px;font-size:17.5px;color:#606266;font-weight:normal;">原材料</div>
<div class="t" style="left:1647.0px;width:122px;text-align:center;top:456.98999999999995px;height:24px;line-height:24px;font-size:17.5px;color:#606266;font-weight:normal;">千克</div>
<div class="t" style="left:1852px;top:456.59px;height:24px;line-height:24px;font-size:15px;color:#1890ff;font-weight:normal;">选择</div>
<div class="t" style="left:1899.8px;top:456.59px;height:24px;line-height:24px;font-size:15px;color:#67c23a;font-weight:normal;">查看</div>
<div class="b" style="left:665px;top:488.76px;width:1348px;height:2.0px;background:#dfe6ec;"></div>
<div class="t" style="left:665.0px;width:208px;text-align:center;top:499.93px;height:24px;line-height:24px;font-size:17.5px;color:#606266;font-weight:normal;">0103000002</div>
<div class="t" style="left:873.0px;width:448px;text-align:center;top:499.93px;height:24px;line-height:24px;font-size:17.5px;color:#606266;font-weight:normal;">配件</div>
<div class="t" style="left:1647.0px;width:122px;text-align:center;top:499.93px;height:24px;line-height:24px;font-size:17.5px;color:#606266;font-weight:normal;">个</div>
<div class="t" style="left:1852px;top:499.53000000000003px;height:24px;line-height:24px;font-size:15px;color:#1890ff;font-weight:normal;">选择</div>
<div class="t" style="left:1899.8px;top:499.53000000000003px;height:24px;line-height:24px;font-size:15px;color:#67c23a;font-weight:normal;">查看</div>
<div class="b" style="left:665px;top:531.7px;width:1348px;height:2.0px;background:#dfe6ec;"></div>
<div class="t" style="left:665.0px;width:208px;text-align:center;top:542.8700000000001px;height:24px;line-height:24px;font-size:17.5px;color:#606266;font-weight:normal;">0107000001</div>
<div class="t" style="left:873.0px;width:448px;text-align:center;top:542.8700000000001px;height:24px;line-height:24px;font-size:17.5px;color:#606266;font-weight:normal;">包装箱</div>
<div class="t" style="left:1647.0px;width:122px;text-align:center;top:542.8700000000001px;height:24px;line-height:24px;font-size:17.5px;color:#606266;font-weight:normal;">个</div>
<div class="t" style="left:1852px;top:542.47px;height:24px;line-height:24px;font-size:15px;color:#1890ff;font-weight:normal;">选择</div>
<div class="t" style="left:1899.8px;top:542.47px;height:24px;line-height:24px;font-size:15px;color:#67c23a;font-weight:normal;">查看</div>
<div class="b" style="left:665px;top:574.64px;width:1348px;height:2.0px;background:#dfe6ec;"></div>
<div class="t" style="left:665.0px;width:208px;text-align:center;top:585.8100000000001px;height:24px;line-height:24px;font-size:17.5px;color:#606266;font-weight:normal;">0108000001</div>
<div class="t" style="left:873.0px;width:448px;text-align:center;top:585.8100000000001px;height:24px;line-height:24px;font-size:17.5px;color:#606266;font-weight:normal;">测试</div>
<div class="t" style="left:1647.0px;width:122px;text-align:center;top:585.8100000000001px;height:24px;line-height:24px;font-size:17.5px;color:#606266;font-weight:normal;">台</div>
<div class="t" style="left:1852px;top:585.41px;height:24px;line-height:24px;font-size:15px;color:#1890ff;font-weight:normal;">选择</div>
<div class="t" style="left:1899.8px;top:585.41px;height:24px;line-height:24px;font-size:15px;color:#67c23a;font-weight:normal;">查看</div>
<div class="b" style="left:665px;top:617.5799999999999px;width:1348px;height:2.0px;background:#dfe6ec;"></div>
<div class="t" style="left:665.0px;width:208px;text-align:center;top:628.75px;height:24px;line-height:24px;font-size:17.5px;color:#606266;font-weight:normal;">0104000002</div>
<div class="t" style="left:873.0px;width:448px;text-align:center;top:628.75px;height:24px;line-height:24px;font-size:17.5px;color:#606266;font-weight:normal;">拉杆</div>
<div class="t" style="left:1647.0px;width:122px;text-align:center;top:628.75px;height:24px;line-height:24px;font-size:17.5px;color:#606266;font-weight:normal;">台</div>
<div class="t" style="left:1852px;top:628.3499999999999px;height:24px;line-height:24px;font-size:15px;color:#1890ff;font-weight:normal;">选择</div>
<div class="t" style="left:1899.8px;top:628.3499999999999px;height:24px;line-height:24px;font-size:15px;color:#67c23a;font-weight:normal;">查看</div>
<div class="b" style="left:665px;top:660.52px;width:1348px;height:2.0px;background:#dfe6ec;"></div>
<div class="t" style="left:665.0px;width:208px;text-align:center;top:671.69px;height:24px;line-height:24px;font-size:17.5px;color:#606266;font-weight:normal;">0104000001</div>
<div class="t" style="left:873.0px;width:448px;text-align:center;top:671.69px;height:24px;line-height:24px;font-size:17.5px;color:#606266;font-weight:normal;">保存箱拉杆</div>
<div class="t" style="left:1321.0px;width:326px;text-align:center;top:671.69px;height:24px;line-height:24px;font-size:17.5px;color:#606266;font-weight:normal;">lx-001</div>
<div class="t" style="left:1647.0px;width:122px;text-align:center;top:671.69px;height:24px;line-height:24px;font-size:17.5px;color:#606266;font-weight:normal;">台</div>
<div class="t" style="left:1852px;top:671.29px;height:24px;line-height:24px;font-size:15px;color:#1890ff;font-weight:normal;">选择</div>
<div class="t" style="left:1899.8px;top:671.29px;height:24px;line-height:24px;font-size:15px;color:#67c23a;font-weight:normal;">查看</div>
<div class="b" style="left:665px;top:703.46px;width:1348px;height:2.0px;background:#dfe6ec;"></div>
<div class="t" style="left:665.0px;width:208px;text-align:center;top:714.6300000000001px;height:24px;line-height:24px;font-size:17.5px;color:#606266;font-weight:normal;">0106000009</div>
<div class="t" style="left:873.0px;width:448px;text-align:center;top:714.6300000000001px;height:24px;line-height:24px;font-size:17.5px;color:#606266;font-weight:normal;">电脑20260105</div>
<div class="t" style="left:1647.0px;width:122px;text-align:center;top:714.6300000000001px;height:24px;line-height:24px;font-size:17.5px;color:#606266;font-weight:normal;">台</div>
<div class="t" style="left:1852px;top:714.23px;height:24px;line-height:24px;font-size:15px;color:#1890ff;font-weight:normal;">选择</div>
<div class="t" style="left:1899.8px;top:714.23px;height:24px;line-height:24px;font-size:15px;color:#67c23a;font-weight:normal;">查看</div>
<div class="b" style="left:665px;top:746.4px;width:1348px;height:2.0px;background:#dfe6ec;"></div>
<div class="t" style="left:665.0px;width:208px;text-align:center;top:757.57px;height:24px;line-height:24px;font-size:17.5px;color:#606266;font-weight:normal;">0109000005</div>
<div class="t" style="left:873.0px;width:448px;text-align:center;top:757.57px;height:24px;line-height:24px;font-size:17.5px;color:#606266;font-weight:normal;">1231312</div>
<div class="t" style="left:1321.0px;width:326px;text-align:center;top:757.57px;height:24px;line-height:24px;font-size:17.5px;color:#606266;font-weight:normal;">1231</div>
<div class="t" style="left:1647.0px;width:122px;text-align:center;top:757.57px;height:24px;line-height:24px;font-size:17.5px;color:#606266;font-weight:normal;">吨</div>
<div class="t" style="left:1852px;top:757.17px;height:24px;line-height:24px;font-size:15px;color:#1890ff;font-weight:normal;">选择</div>
<div class="t" style="left:1899.8px;top:757.17px;height:24px;line-height:24px;font-size:15px;color:#67c23a;font-weight:normal;">查看</div>
<div class="b" style="left:665px;top:789.3399999999999px;width:1348px;height:2.0px;background:#dfe6ec;"></div>
<div class="t" style="left:665.0px;width:208px;text-align:center;top:800.51px;height:24px;line-height:24px;font-size:17.5px;color:#606266;font-weight:normal;">0100000004</div>
<div class="t" style="left:873.0px;width:448px;text-align:center;top:800.51px;height:24px;line-height:24px;font-size:17.5px;color:#606266;font-weight:normal;">cp001</div>
<div class="t" style="left:1647.0px;width:122px;text-align:center;top:800.51px;height:24px;line-height:24px;font-size:17.5px;color:#606266;font-weight:normal;">千米</div>
<div class="t" style="left:1852px;top:800.1099999999999px;height:24px;line-height:24px;font-size:15px;color:#1890ff;font-weight:normal;">选择</div>
<div class="t" style="left:1899.8px;top:800.1099999999999px;height:24px;line-height:24px;font-size:15px;color:#67c23a;font-weight:normal;">查看</div>
<div class="b" style="left:665px;top:832.28px;width:1348px;height:2.0px;background:#dfe6ec;"></div>
<div class="t" style="left:665.0px;width:208px;text-align:center;top:843.45px;height:24px;line-height:24px;font-size:17.5px;color:#606266;font-weight:normal;">0100000005</div>
<div class="t" style="left:873.0px;width:448px;text-align:center;top:843.45px;height:24px;line-height:24px;font-size:17.5px;color:#606266;font-weight:normal;">88888</div>
<div class="t" style="left:1647.0px;width:122px;text-align:center;top:843.45px;height:24px;line-height:24px;font-size:17.5px;color:#606266;font-weight:normal;">台</div>
<div class="t" style="left:1852px;top:843.05px;height:24px;line-height:24px;font-size:15px;color:#1890ff;font-weight:normal;">选择</div>
<div class="t" style="left:1899.8px;top:843.05px;height:24px;line-height:24px;font-size:15px;color:#67c23a;font-weight:normal;">查看</div>
<div class="b" style="left:665px;top:875.22px;width:1348px;height:2.0px;background:#dfe6ec;"></div>
<div class="t" style="left:665.0px;width:208px;text-align:center;top:886.3900000000001px;height:24px;line-height:24px;font-size:17.5px;color:#606266;font-weight:normal;">0101000003</div>
<div class="t" style="left:873.0px;width:448px;text-align:center;top:886.3900000000001px;height:24px;line-height:24px;font-size:17.5px;color:#606266;font-weight:normal;">5</div>
<div class="t" style="left:1647.0px;width:122px;text-align:center;top:886.3900000000001px;height:24px;line-height:24px;font-size:17.5px;color:#606266;font-weight:normal;">千克</div>
<div class="t" style="left:1852px;top:885.99px;height:24px;line-height:24px;font-size:15px;color:#1890ff;font-weight:normal;">选择</div>
<div class="t" style="left:1899.8px;top:885.99px;height:24px;line-height:24px;font-size:15px;color:#67c23a;font-weight:normal;">查看</div>
<div class="b" style="left:665px;top:918.16px;width:1348px;height:2.0px;background:#dfe6ec;"></div>
<div class="t" style="left:665.0px;width:208px;text-align:center;top:929.33px;height:24px;line-height:24px;font-size:17.5px;color:#606266;font-weight:normal;">0100000006</div>
<div class="t" style="left:873.0px;width:448px;text-align:center;top:929.33px;height:24px;line-height:24px;font-size:17.5px;color:#606266;font-weight:normal;">测试机器</div>
<div class="t" style="left:1647.0px;width:122px;text-align:center;top:929.33px;height:24px;line-height:24px;font-size:17.5px;color:#606266;font-weight:normal;">套</div>
<div class="t" style="left:1852px;top:928.93px;height:24px;line-height:24px;font-size:15px;color:#1890ff;font-weight:normal;">选择</div>
<div class="t" style="left:1899.8px;top:928.93px;height:24px;line-height:24px;font-size:15px;color:#67c23a;font-weight:normal;">查看</div>
<div class="b" style="left:665px;top:961.0999999999999px;width:1348px;height:2.0px;background:#dfe6ec;"></div>
<div class="t" style="left:665.0px;width:208px;text-align:center;top:972.27px;height:24px;line-height:24px;font-size:17.5px;color:#606266;font-weight:normal;">0105000003</div>
<div class="t" style="left:873.0px;width:448px;text-align:center;top:972.27px;height:24px;line-height:24px;font-size:17.5px;color:#606266;font-weight:normal;">家庭机器人</div>
<div class="t" style="left:1321.0px;width:326px;text-align:center;top:972.27px;height:24px;line-height:24px;font-size:17.5px;color:#606266;font-weight:normal;">150</div>
<div class="t" style="left:1647.0px;width:122px;text-align:center;top:972.27px;height:24px;line-height:24px;font-size:17.5px;color:#606266;font-weight:normal;">吨</div>
<div class="t" style="left:1852px;top:971.8699999999999px;height:24px;line-height:24px;font-size:15px;color:#1890ff;font-weight:normal;">选择</div>
<div class="t" style="left:1899.8px;top:971.8699999999999px;height:24px;line-height:24px;font-size:15px;color:#67c23a;font-weight:normal;">查看</div>
<div class="b" style="left:665px;top:1004.04px;width:1348px;height:2.0px;background:#dfe6ec;"></div>
<div class="t" style="left:665.0px;width:208px;text-align:center;top:1015.21px;height:24px;line-height:24px;font-size:17.5px;color:#606266;font-weight:normal;">0101000004</div>
<div class="t" style="left:873.0px;width:448px;text-align:center;top:1015.21px;height:24px;line-height:24px;font-size:17.5px;color:#606266;font-weight:normal;">22</div>
<div class="t" style="left:1647.0px;width:122px;text-align:center;top:1015.21px;height:24px;line-height:24px;font-size:17.5px;color:#606266;font-weight:normal;">台</div>
<div class="t" style="left:1852px;top:1014.81px;height:24px;line-height:24px;font-size:15px;color:#1890ff;font-weight:normal;">选择</div>
<div class="t" style="left:1899.8px;top:1014.81px;height:24px;line-height:24px;font-size:15px;color:#67c23a;font-weight:normal;">查看</div>
<div class="b" style="left:665px;top:1046.98px;width:1348px;height:2.0px;background:#dfe6ec;"></div>
<div class="b" style="left:600px;top:99px;width:1200px;height:564.8px;background:#fff;border-radius:2px;box-shadow:0 1px 4px rgba(0,0,0,.30);"></div>
<svg style="left:1758.2px;top:129.70000000000002px" width="12.4" height="12.4"><path d="M0 0 L12.4 12.4 M12.4 0 L0 12.4" stroke="#909399" stroke-width="1.3"/></svg>
<div class="b" style="left:786.3px;top:141.3px;width:987.6000000000001px;height:43.79999999999998px;border:2px solid #dde2eb;border-radius:5px;background:#f5f7fa;"></div>
<div class="t" style="left:807.8px;top:150.9px;height:24px;line-height:24px;font-size:17.5px;color:#1890ff;font-weight:normal;">成品 / 纸杯机</div>
<svg style="left:1743px;top:159.8px" width="14" height="7.0"><path d="M0 0 L7.0 7.0 L14 0" fill="none" stroke="#c0c4cc" stroke-width="1.2"/></svg>
<div class="t" style="left:569px;width:200px;text-align:right;top:150.9px;height:24px;line-height:24px;font-size:17.5px;color:#606266;font-weight:normal;">分类信息</div>
<div class="b" style="left:786.3px;top:198.2px;width:413.70000000000005px;height:43.80000000000001px;border:2px solid #dde2eb;border-radius:5px;background:#f5f7fa;"></div>
<div class="t" style="left:807.8px;top:207.8px;height:24px;line-height:24px;font-size:17.5px;color:#303133;font-weight:normal;">0101000001</div>
<div class="t" style="left:569px;width:200px;text-align:right;top:207.8px;height:24px;line-height:24px;font-size:17.5px;color:#606266;font-weight:normal;">物料编码</div>
<div class="t" style="left:1143.6px;width:200px;text-align:right;top:207.8px;height:24px;line-height:24px;font-size:17.5px;color:#606266;font-weight:normal;">更新时间</div>
<div class="b" style="left:1360.3px;top:198.2px;width:413.60000000000014px;height:43.80000000000001px;border:2px solid #dde2eb;border-radius:5px;background:#f5f7fa;"></div>
<div class="t" style="left:1381.8px;top:207.8px;height:24px;line-height:24px;font-size:17.5px;color:#303133;font-weight:normal;">2026-01-14 14:48:46</div>
<div class="b" style="left:786.3px;top:254.7px;width:413.70000000000005px;height:42.30000000000001px;border:2px solid #dde2eb;border-radius:5px;background:#f5f7fa;"></div>
<div class="t" style="left:807.8px;top:263.54999999999995px;height:24px;line-height:24px;font-size:17.5px;color:#303133;font-weight:normal;">118S ZY型纸杯机</div>
<div class="t" style="left:569px;width:200px;text-align:right;top:263.6px;height:24px;line-height:24px;font-size:17.5px;color:#606266;font-weight:normal;">物料名称</div>
<div class="t" style="left:1458.3px;width:200px;text-align:right;top:263.6px;height:24px;line-height:24px;font-size:17.5px;color:#606266;font-weight:normal;">允许负库存</div>
<div class="b" style="left:1674.2px;top:265px;width:79.59999999999991px;height:25px;background:#e8eaee;border-radius:12.5px;"></div>
<div class="b" style="left:1677.8px;top:268.2px;width:21.100000000000136px;height:21.0px;background:#fff;border-radius:50%;"></div>
<div class="b" style="left:786.3px;top:310.5px;width:251.5px;height:43.400000000000034px;border:2px solid #dde2eb;border-radius:5px;background:#f5f7fa;"></div>
<div class="t" style="left:807.8px;top:319.9px;height:24px;line-height:24px;font-size:17.5px;color:#303133;font-weight:normal;">台</div>
<div class="t" style="left:569px;width:200px;text-align:right;top:319.9px;height:24px;line-height:24px;font-size:17.5px;color:#606266;font-weight:normal;">主计量</div>
<svg style="left:1007px;top:328px" width="13.200000000000045" height="7"><path d="M0 0 L6.600000000000023 7 L13.200000000000045 0" fill="none" stroke="#c0c4cc" stroke-width="1.2"/></svg>
<div class="b" style="left:786.3px;top:366.3px;width:413.70000000000005px;height:43.5px;border:2px solid #dde2eb;border-radius:5px;background:#f5f7fa;"></div>
<div class="t" style="left:807.8px;top:375.75px;height:24px;line-height:24px;font-size:17.5px;color:#303133;font-weight:normal;">ZY型</div>
<div class="t" style="left:569px;width:200px;text-align:right;top:375.8px;height:24px;line-height:24px;font-size:17.5px;color:#606266;font-weight:normal;">型号规格</div>
<div class="b" style="left:786.3px;top:424.2px;width:413.70000000000005px;height:42.400000000000034px;border:2px solid #dde2eb;border-radius:5px;background:#f5f7fa;"></div>
<div class="t" style="left:569px;width:200px;text-align:right;top:433.1px;height:24px;line-height:24px;font-size:17.5px;color:#606266;font-weight:normal;">规格描述</div>
<div class="b" style="left:626.3px;top:477px;width:1127.7px;height:145.5px;background:#fff;border-radius:6px;box-shadow:0 2px 12px rgba(0,0,0,.10);"></div>
<div class="t" style="left:629.8px;width:200px;text-align:right;top:509.9px;height:24px;line-height:24px;font-size:17.5px;color:#606266;font-weight:normal;">当前库存数量</div>
<div class="b" style="left:846.4px;top:500.2px;width:343.6px;height:43.900000000000034px;border:2px solid #dde2eb;border-radius:5px;background:#f5f7fa;"></div>
<div class="t" style="left:867.9px;top:509.85px;height:24px;line-height:24px;font-size:17.5px;color:#1890ff;font-weight:normal;">2137.0000</div>
<div class="t" style="left:629.8px;width:200px;text-align:right;top:566.2px;height:24px;line-height:24px;font-size:17.5px;color:#606266;font-weight:normal;">锁定库存数量</div>
<div class="b" style="left:846.4px;top:557.2px;width:343.6px;height:42.69999999999993px;border:2px solid #dde2eb;border-radius:5px;background:#f5f7fa;"></div>
<div class="t" style="left:867.9px;top:566.25px;height:24px;line-height:24px;font-size:17.5px;color:#303133;font-weight:normal;">150012.0000</div>
<div class="t" style="left:1174.2px;width:200px;text-align:right;top:509.9px;height:24px;line-height:24px;font-size:17.5px;color:#606266;font-weight:normal;">实际可用数量</div>
<div class="b" style="left:1390.8px;top:500.2px;width:342.29999999999995px;height:43.900000000000034px;border:2px solid #dde2eb;border-radius:5px;background:#f5f7fa;"></div>
<div class="t" style="left:1412.3px;top:509.85px;height:24px;line-height:24px;font-size:17.5px;color:#13ce66;font-weight:normal;">-147875.0000</div>
<div class="t" style="left:1174.2px;width:200px;text-align:right;top:566.2px;height:24px;line-height:24px;font-size:17.5px;color:#606266;font-weight:normal;">在途库存数量</div>
<div class="b" style="left:1390.8px;top:557.2px;width:342.29999999999995px;height:42.69999999999993px;border:2px solid #dde2eb;border-radius:5px;background:#f5f7fa;"></div>
<div class="t" style="left:1412.3px;top:566.25px;height:24px;line-height:24px;font-size:17.5px;color:#303133;font-weight:normal;">0.0000</div>
</body></html>
